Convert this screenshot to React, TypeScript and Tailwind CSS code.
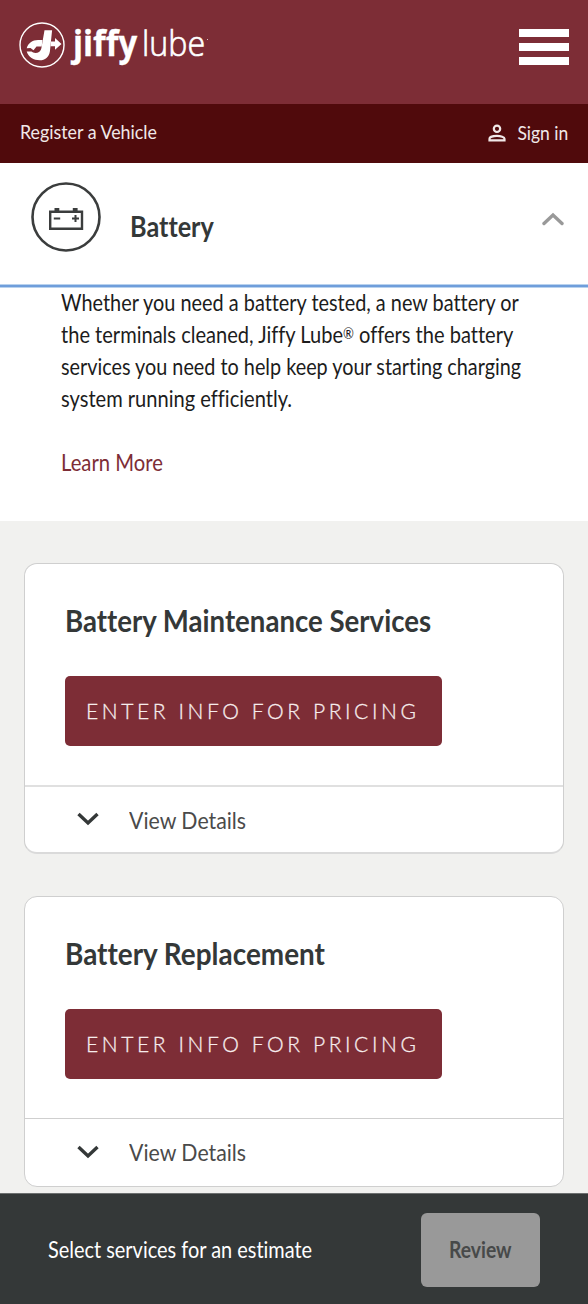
import { clsx } from 'clsx';

interface ServiceCardProps {
  title: string;
  titleClass: string;
  first?: boolean;
}

function Logo() {
  return (
    <div className="flex h-[48px] items-center">
      <svg className="h-[48px] w-[48px] shrink-0" viewBox="0 0 48 48" fill="none">
        <circle cx="24" cy="24" r="22" stroke="#fff" strokeWidth="1.4" />
        <path
          d="M26.500 9.300h7.600L31.900 30.500C31 36 27 39.300 21.800 39.300C15.500 39.300 10.500 36.500 8.700 30.600H13.500C15 32.300 19 32.600 21 31C22.700 29.700 23.300 28 23.600 26z"
          fill="#fff"
        />
        <path d="M8.700 27.200C10 22 14.500 19 20 18.900H24.500L23.700 25.500H18.500L15.500 29.300L12.500 27z" fill="#fff" />
        <path d="M33 20.600H37V17L43.500 22.900L37 28.800V25.200H32.500z" fill="#fff" />
      </svg>
      <div className="mb-[5px] ml-[7px] flex items-baseline text-[35px] leading-[42px] text-white">
        <span className="w-[69px] origin-left scale-x-[0.94] font-bold [-webkit-text-stroke:0.3px_white]">jiffy</span>
        <span className="origin-left scale-x-[0.92] font-light [-webkit-text-stroke:0.7px_white]">lube</span>
      </div>
      <span className="-ml-[4px] mb-[12px] h-px w-px bg-white/70" />
    </div>
  );
}

function ServiceCard({ title, titleClass, first }: ServiceCardProps) {
  return (
    <section
      className={clsx(
        'h-[291px] rounded-[13px] border border-[#cfcfcf] bg-white',
        first && 'border-b-2 border-b-[#dadada]'
      )}
    >
      <div className="h-[221px] pl-10 pt-[36px]">
        <h3 className={clsx('h-[40px] w-max origin-left text-[30px] font-bold leading-[40px]', titleClass)}>
          {title}
        </h3>
        <button className="mt-[36px] flex h-[70px] w-[377px] items-center rounded-[5px] bg-[#7d2d36] pb-[1px] pl-[21px] text-[#f6ecec]">
          <span className="w-max origin-left whitespace-nowrap text-[21px] font-light tracking-[3.600px] [-webkit-text-stroke:0.3px_#f6ecec]">
            ENTER INFO FOR PRICING
          </span>
        </button>
      </div>
      <div
        className={clsx(
          'flex h-[68px] items-center pl-[52px]',
          first ? 'border-t-2 border-[#e0e0e0]' : 'border-t border-[#cfcfcf]'
        )}
      >
        <svg className="mb-[2px] h-[14px] w-[22px]" viewBox="0 0 22 14" fill="none">
          <path d="M1.500 2l9.500 9 9.500-9" stroke="#343838" strokeWidth="3.400" />
        </svg>
        <span className="ml-[30px] w-max origin-left scale-x-[0.925] text-[23px] text-[#4a4a4a]">View Details</span>
      </div>
    </section>
  );
}

export default function App() {
  return (
    <div className="flex h-[1304px] w-[588px] flex-col overflow-hidden bg-[#f1f1ef] font-['Lato',sans-serif] text-[#343838] [font-variant-ligatures:none]">
      <header className="flex h-[104px] items-start justify-between bg-[#7d2d36] pl-[18px] pr-[19px] font-['Open_Sans',sans-serif]">
        <div className="pt-[21px]">
          <Logo />
        </div>
        <div className="mt-[29px] flex w-[50px] flex-col gap-[6px]">
          <span className="h-2 bg-white" />
          <span className="h-2 bg-white" />
          <span className="h-2 bg-white" />
        </div>
      </header>

      <nav className="flex h-[59px] items-center justify-between bg-[#500a0c] pl-[20px] pr-[20px] text-[19px] text-[#f0e8e8]">
        <span className="mb-[2px] origin-left scale-x-[0.938]">Register a Vehicle</span>
        <span className="flex items-center">
          <svg className="mb-[2px] mr-[7px] h-[18px] w-[18px]" viewBox="0 0 18 18" fill="none" stroke="#f0e8e8" strokeWidth="2.200">
            <circle cx="9" cy="4.800" r="3.200" />
            <path d="M1.500 16.400v-1.600c0-1.800 3.700-2.900 7.500-2.900s7.500 1.100 7.500 2.900v1.600z" />
          </svg>
          <span className="origin-right scale-x-[0.92]">Sign in</span>
        </span>
      </nav>

      <div className="flex h-[121px] items-start justify-between bg-white pl-[31px] pr-[24px]">
        <div className="flex pt-[19px]">
          <svg className="h-[70px] w-[70px]" viewBox="0 0 70 70" fill="none">
            <circle cx="35" cy="35" r="33.500" stroke="#3b3d3d" strokeWidth="2.600" />
            <path d="M19.200 29.800h31.800v17h-31.800z" stroke="#3b3d3d" strokeWidth="2.400" />
            <path d="M23.500 26h4.800v3h-4.800zM41.800 26h4.800v3h-4.800z" fill="#3b3d3d" />
            <path d="M22.800 36.400h6.400M41 36.400h7M44.500 32.900v7" stroke="#3b3d3d" strokeWidth="2" />
          </svg>
          <h2 className="ml-[29px] mt-[25px] w-max origin-left scale-x-[0.9] text-[28px] font-bold leading-[38px]">
            Battery
          </h2>
        </div>
        <svg className="mt-[49px] h-[14px] w-[22px]" viewBox="0 0 22 14" fill="none">
          <path d="M2 11.500l9-8.500 9 8.500" stroke="#999" strokeWidth="3.400" strokeLinecap="round" />
        </svg>
      </div>
      <div className="h-[4px] shrink-0 border-y border-[#b9d2ee] bg-[#6f9edb]" />

      <div className="h-[233px] bg-white pl-[61px] text-[23px] leading-[32px] text-[#1c1c1c]">
        <div className="-mt-[2px]">
          <p className="w-max origin-left scale-x-[0.864] whitespace-nowrap">
            Whether you need a battery tested, a new battery or
          </p>
          <p className="w-max origin-left scale-x-[0.872] whitespace-nowrap">
            the terminals cleaned, Jiffy Lube<span className="align-[4px] text-[15px] leading-none">®</span> offers the battery
          </p>
          <p className="w-max origin-left scale-x-[0.861] whitespace-nowrap">
            services you need to help keep your starting charging
          </p>
          <p className="w-max origin-left scale-x-[0.873] whitespace-nowrap">system running efficiently.</p>
          <a className="mt-[32px] block w-max origin-left scale-x-[0.88] text-[#7d2d36]">Learn More</a>
        </div>
      </div>

      <main className="flex h-[672px] flex-col gap-[42px] px-6 pt-[42px]">
        <ServiceCard title="Battery Maintenance Services" titleClass="scale-x-[0.92]" first />
        <ServiceCard title="Battery Replacement" titleClass="scale-x-[0.93]" />
      </main>

      <footer className="flex h-[111px] shrink-0 items-center justify-between border-t border-[#6c6f6f] bg-[#343838] pl-12 pr-12 pt-[1px] text-[23px] text-white">
        <span className="w-max origin-left scale-x-[0.866] whitespace-nowrap">Select services for an estimate</span>
        <button className="h-[74px] w-[119px] rounded-[6px] bg-[#999] font-bold text-[#474949]">
          <span className="inline-block scale-x-[0.84]">Review</span>
        </button>
      </footer>
    </div>
  );
}
